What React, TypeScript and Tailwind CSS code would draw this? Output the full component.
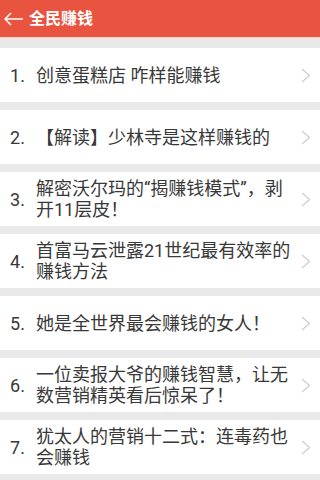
const items = [
  '创意蛋糕店 咋样能赚钱',
  '【解读】少林寺是这样赚钱的',
  '解密沃尔玛的“揭赚钱模式”，剥开11层皮！',
  '首富马云泄露21世纪最有效率的赚钱方法',
  '她是全世界最会赚钱的女人！',
  '一位卖报大爷的赚钱智慧，让无数营销精英看后惊呆了！',
  '犹太人的营销十二式：连毒药也会赚钱',
];

const font = { fontFamily: '"Roboto", "Noto Sans CJK SC", sans-serif' };

const App = () => {
  return (
    <div className="h-[480px] w-[320px] overflow-hidden bg-[#e9e9e9]" style={font}>
      <header className="flex h-[37px] items-center bg-[#e8543f] pl-[4px] text-white">
        <svg width="19" height="14" viewBox="0 0 19 14" fill="none" stroke="white" strokeWidth="1.5">
          <path d="M7 1 L1 7 L7 13 M1 7 H19" />
        </svg>
        <span className="ml-[6px] text-[16px] font-bold leading-none">全民赚钱</span>
      </header>
      <div className="h-[2px] bg-[#f6dcd7]" />

      <ul className="flex flex-col gap-[8px] pt-[9px]">
        {items.map((title, i) => (
          <li key={i} className="flex h-[54px] items-center bg-white pr-[9px]">
            <span className="w-[36px] shrink-0 pl-[10px] pt-[2px] text-[18px] leading-none text-[#383838]">
              {i + 1}.
            </span>
            <span className="flex-1 pr-[2px] text-[18px] leading-[21px] text-[#383838]">
              {title}
            </span>
            <svg width="10" height="15" viewBox="0 0 10 15" fill="none" stroke="#cfcfcf" strokeWidth="1.3">
              <path d="M1 1 L8.5 7.5 L1 14" />
            </svg>
          </li>
        ))}
      </ul>
    </div>
  );
};

export default App;
